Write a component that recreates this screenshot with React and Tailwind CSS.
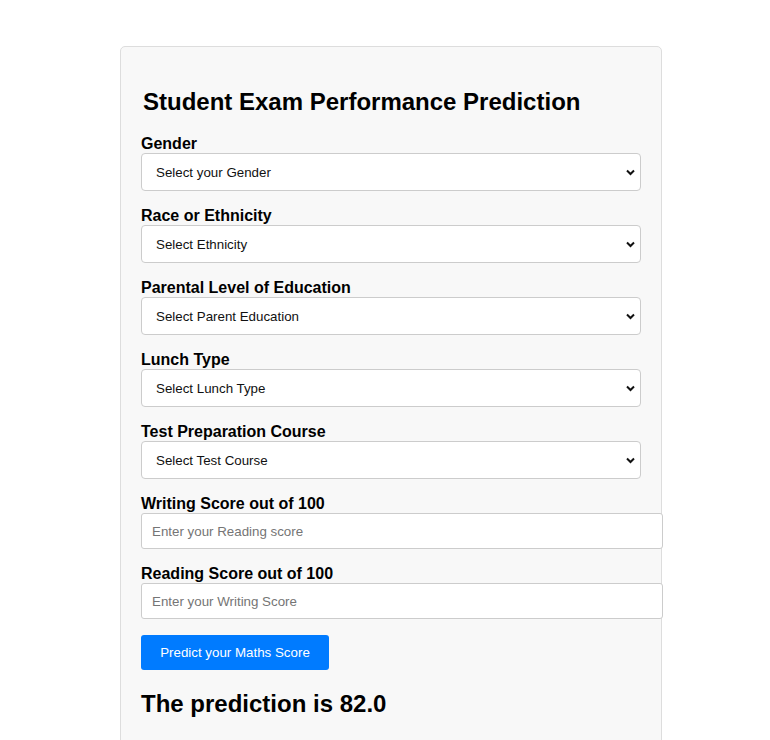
import React from "react";

function Chevron() {
  return (
    <svg
      className="pointer-events-none absolute right-[6px] top-[16px]"
      width="9"
      height="7"
      viewBox="0 0 9 7"
    >
      <path d="M1 1.5 L4.5 5 L8 1.5" fill="none" stroke="#111" strokeWidth="2" />
    </svg>
  );
}

function SelectField({ label, placeholder }) {
  return (
    <div className="mb-[15px]">
      <label className="block text-[16px] leading-[19px] font-bold text-black">{label}</label>
      <div className="relative w-[500px]">
        <select
          defaultValue=""
          className="block w-[500px] h-[38px] appearance-none rounded-[4px] border border-[#cccccc] bg-white pl-[14px] pt-[2px] text-[13.33px] text-[#111] outline-none"
        >
          <option value="" disabled>
            {placeholder}
          </option>
        </select>
        <Chevron />
      </div>
    </div>
  );
}

function InputField({ label, placeholder }) {
  return (
    <div className="mb-[15px]">
      <label className="block text-[16px] leading-[19px] font-bold text-black">{label}</label>
      <input
        type="number"
        placeholder={placeholder}
        className="block w-[522px] h-[36px] rounded-[3px] border border-[#cccccc] bg-white px-[10px] text-[13.33px] placeholder:text-[#757575] outline-none"
      />
    </div>
  );
}

export default function App() {
  return (
    <div className="min-h-[740px] bg-white pt-[46px] pl-[120px] font-['Liberation_Sans',Arial,sans-serif]">
      <div className="w-[542px] rounded-[5px] border border-[#dddddd] bg-[#f8f8f8] px-[20px] pt-[20px] pb-[30px]">
        <h1 className="mt-[21px] mb-[18px] ml-[2px] text-[24px] leading-[28px] font-bold text-black">
          Student Exam Performance Prediction
        </h1>
        <SelectField label="Gender" placeholder="Select your Gender" />
        <SelectField label="Race or Ethnicity" placeholder="Select Ethnicity" />
        <SelectField label="Parental Level of Education" placeholder="Select Parent Education" />
        <SelectField label="Lunch Type" placeholder="Select Lunch Type" />
        <SelectField label="Test Preparation Course" placeholder="Select Test Course" />
        <InputField label="Writing Score out of 100" placeholder="Enter your Reading score" />
        <InputField label="Reading Score out of 100" placeholder="Enter your Writing Score" />
        <button className="mt-[16px] block w-[188px] h-[35px] rounded-[3px] bg-[#007bff] text-[13.33px] text-white">
          Predict your Maths Score
        </button>
        <h2 className="mt-[20px] text-[24px] leading-[28px] font-bold text-black">The prediction is 82.0</h2>
      </div>
    </div>
  );
}
